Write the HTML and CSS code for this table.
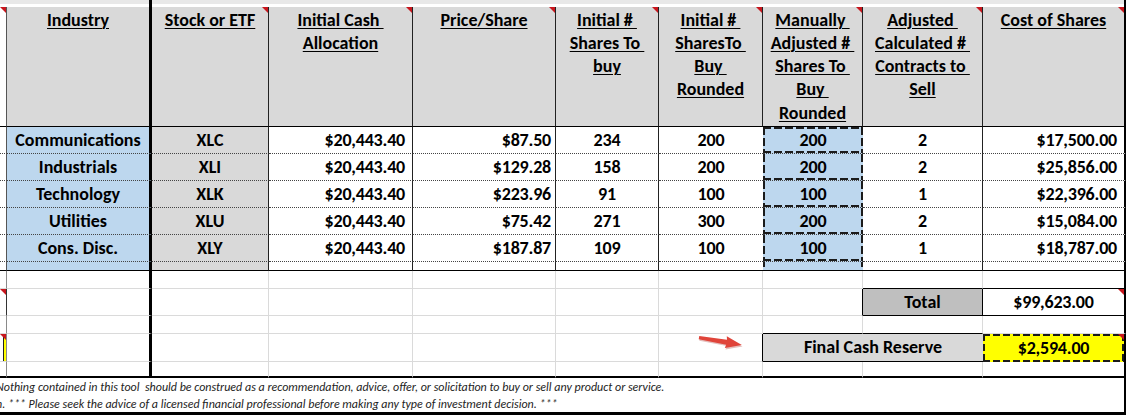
FILE: index.html
```html
<!DOCTYPE html>
<html lang="en">
<head>
<meta charset="utf-8">
<title>Sector allocation</title>
<link rel="stylesheet" href="styles.css">
</head>
<body>
<div class="sheet">
  <!-- top band -->
  <div class="top"></div><div class="top k1"></div><div class="top"></div><div class="top"></div><div class="top"></div><div class="top"></div><div class="top"></div><div class="top"></div><div class="top"></div><div class="top k9"></div>

  <!-- header -->
  <div class="hd stub note"></div>
  <div class="hd k1">Industry</div>
  <div class="hd note">Stock or ETF</div>
  <div class="hd note">Initial Cash&nbsp;<br>Allocation</div>
  <div class="hd note">Price/Share</div>
  <div class="hd note">Initial #&nbsp;<br>Shares To&nbsp;<br>buy</div>
  <div class="hd note">Initial #&nbsp;<br>SharesTo&nbsp;<br>Buy&nbsp;<br>Rounded</div>
  <div class="hd note">Manually&nbsp;<br>Adjusted #&nbsp;<br>Shares To&nbsp;<br>Buy&nbsp;<br>Rounded</div>
  <div class="hd note">Adjusted&nbsp;<br>Calculated #&nbsp;<br>Contracts to&nbsp;<br>Sell</div>
  <div class="hd note k9">Cost of Shares</div>

  <!-- data rows -->
  <div class="dt stub"></div>
  <div class="dt blue k1">Communications</div>
  <div class="dt gray">XLC</div>
  <div class="dt rt num">$20,443.40</div>
  <div class="dt rt rt4 num">$87.50</div>
  <div class="dt num">234</div>
  <div class="dt num nb">200</div>
  <div class="dt num nb ants-t">200</div>
  <div class="dt num">2</div>
  <div class="dt rt num k9">$17,500.00</div>

  <div class="dt stub"></div>
  <div class="dt blue k1">Industrials</div>
  <div class="dt gray">XLI</div>
  <div class="dt rt num">$20,443.40</div>
  <div class="dt rt rt4 num">$129.28</div>
  <div class="dt num">158</div>
  <div class="dt num nb">200</div>
  <div class="dt num nb ants">200</div>
  <div class="dt num">2</div>
  <div class="dt rt num k9">$25,856.00</div>

  <div class="dt stub"></div>
  <div class="dt blue k1">Technology</div>
  <div class="dt gray">XLK</div>
  <div class="dt rt num">$20,443.40</div>
  <div class="dt rt rt4 num">$223.96</div>
  <div class="dt num">91</div>
  <div class="dt num nb">100</div>
  <div class="dt num nb ants">100</div>
  <div class="dt num">1</div>
  <div class="dt rt num k9">$22,396.00</div>

  <div class="dt stub"></div>
  <div class="dt blue k1">Utilities</div>
  <div class="dt gray">XLU</div>
  <div class="dt rt num">$20,443.40</div>
  <div class="dt rt rt4 num">$75.42</div>
  <div class="dt num">271</div>
  <div class="dt num nb">300</div>
  <div class="dt num nb ants">200</div>
  <div class="dt num">2</div>
  <div class="dt rt num k9">$15,084.00</div>

  <div class="dt stub"></div>
  <div class="dt blue k1">Cons. Disc.</div>
  <div class="dt gray">XLY</div>
  <div class="dt rt num">$20,443.40</div>
  <div class="dt rt rt4 num">$187.87</div>
  <div class="dt num">109</div>
  <div class="dt num nb">100</div>
  <div class="dt num nb ants">100</div>
  <div class="dt num">1</div>
  <div class="dt rt num k9">$18,787.00</div>

  <!-- small spacer row -->
  <div class="sm stub"></div>
  <div class="sm blue k1"></div>
  <div class="sm gray"></div>
  <div class="sm"></div>
  <div class="sm"></div>
  <div class="sm"></div>
  <div class="sm nb"></div>
  <div class="sm nb ants-s"></div>
  <div class="sm"></div>
  <div class="sm k9"></div>

  <!-- lower row 1 -->
  <div class="lo stub"></div>
  <div class="lo k1"></div>
  <div class="lo"></div>
  <div class="lo"></div>
  <div class="lo"></div>
  <div class="lo"></div>
  <div class="lo"></div>
  <div class="lo"></div>
  <div class="lo bbk"></div>
  <div class="lo bbk k9"></div>

  <!-- lower row 2: total -->
  <div class="lo stub snote note"></div>
  <div class="lo k1"></div>
  <div class="lo"></div>
  <div class="lo"></div>
  <div class="lo"></div>
  <div class="lo"></div>
  <div class="lo"></div>
  <div class="lo brk"></div>
  <div class="tot">Total</div>
  <div class="val note num">$99,623.00</div>

  <!-- lower row 3 -->
  <div class="lo stub"></div>
  <div class="lo k1"></div>
  <div class="lo"></div>
  <div class="lo"></div>
  <div class="lo"></div>
  <div class="lo"></div>
  <div class="lo"></div>
  <div class="lo bbk"></div>
  <div class="lo bbk"></div>
  <div class="lo k9"></div>

  <!-- lower row 4: final cash reserve -->
  <div class="lo stub syel note"></div>
  <div class="lo k1"></div>
  <div class="lo"></div>
  <div class="lo"></div>
  <div class="lo"></div>
  <div class="lo"></div>
  <div class="lo brk">
    <svg class="arrow" width="50" height="16" viewBox="0 0 50 16" aria-hidden="true">
      <g transform="translate(2 3.5) rotate(9.5)">
        <path d="M0 -1.6 L28 -2.4 L27.2 -5.8 L43.5 0.3 L27.2 6.2 L28 2.6 L0 1.8 Z" fill="#a52820" opacity="0.3" transform="translate(0.9 1.3)"/>
        <path d="M0 -1.6 L28 -2.4 L27.2 -5.8 L43.5 0.3 L27.2 6.2 L28 2.6 L0 1.8 Z" fill="#e0443a"/>
      </g>
    </svg>
  </div>
  <div class="fin">Final Cash Reserve</div>
  <div class="yel note num">$2,594.00</div>

  <!-- lower row 5 -->
  <div class="lo end stub"></div>
  <div class="lo end k1"></div>
  <div class="lo end"></div>
  <div class="lo end"></div>
  <div class="lo end"></div>
  <div class="lo end"></div>
  <div class="lo end"></div>
  <div class="lo end"></div>
  <div class="lo end"></div>
  <div class="lo end k9"></div>

  <!-- disclaimer -->
  <div class="disc">
    <p>Nothing contained in this tool&nbsp; should be construed as a recommendation, advice, offer, or solicitation to buy or sell any product or service.</p>
    <p>n. *** Please seek the advice of a licensed financial professional before making any type of investment decision. ***</p>
  </div>
</div>
</body>
</html>
```

FILE: styles.css
```css
* { box-sizing: border-box; }

html, body {
  margin: 0;
  background: #fff;
  overflow: hidden;
}

.sheet {
  display: grid;
  grid-template-columns: 7px 145px 117px 144px 143px 103px 104px 100px 120px 143px;
  grid-template-rows: 7px 120px repeat(5, 27px) 9px 18px 27px 18px 28px 16px 37px;
  width: 1126px;
  font-family: Carlito, Lato, "DejaVu Sans", sans-serif;
  color: #000;
}

.sheet > div { min-width: 0; }

.top {
  background: linear-gradient(#e8e8e8 0 4px, #fff 4px);
}

.hd {
  position: relative;
  background: #d9d9d9;
  border-right: 1px solid #222;
  border-bottom: 1px solid #000;
  padding-top: 1.5px;
  font-weight: 700;
  font-size: 18px;
  line-height: 23.3px;
  text-align: center;
  text-decoration: underline;
  text-decoration-thickness: 1px;
  text-underline-offset: 2px;
  white-space: nowrap;
}

.hd.stub {
  background: #fff;
  border-right: 1px solid #555;
}

.dt {
  border-right: 1px solid #222;
  border-bottom: 1px dotted #444;
  font-weight: 700;
  font-size: 18px;
  line-height: 26px;
  text-align: center;
  white-space: nowrap;
}

.dt.stub { border-right: 1px solid #555; }

.sm {
  border-right: 1px solid #222;
  border-bottom: 1px solid #000;
}

.sm.stub { border-right: 1px solid #555; }

.lo {
  border-right: 1px solid #dadada;
  border-bottom: 1px solid #dadada;
}

.lo.stub { border-right: 1px solid #8a8a8a; }

.lo.end { border-bottom: 2px solid #000; }

.blue { background: #bdd7ee; }
.gray { background: #d9d9d9; }

.rt {
  text-align: right;
  padding-right: 7px;
}

.sheet .rt4 { padding-right: 4px; }

.num { letter-spacing: -0.2px; }

.sheet .nb { border-right: 0; }
.sheet .bbk { border-bottom: 1px solid #000; }
.sheet .brk { border-right: 1px solid #000; }
.sheet .k1 { border-right: 3px solid #000; }
.sheet .k9 { border-right: 2px solid #000; }

/* marching-ants selection (manually adjusted column) */
.ants {
  background:
    repeating-linear-gradient(90deg, #1b1b1b 0 8px, transparent 8px 11px) left bottom / 100% 2px no-repeat,
    repeating-linear-gradient(180deg, #1b1b1b 0 8px, transparent 8px 11px) left top / 2px 100% no-repeat,
    repeating-linear-gradient(180deg, #1b1b1b 0 8px, transparent 8px 11px) right top / 2px 100% no-repeat,
    #bdd7ee;
}

.ants-t {
  background:
    repeating-linear-gradient(90deg, #1b1b1b 0 8px, transparent 8px 11px) left top / 100% 2px no-repeat,
    repeating-linear-gradient(90deg, #1b1b1b 0 8px, transparent 8px 11px) left bottom / 100% 2px no-repeat,
    repeating-linear-gradient(180deg, #1b1b1b 0 8px, transparent 8px 11px) left top / 2px 100% no-repeat,
    repeating-linear-gradient(180deg, #1b1b1b 0 8px, transparent 8px 11px) right top / 2px 100% no-repeat,
    #bdd7ee;
}

.ants-s {
  background:
    repeating-linear-gradient(180deg, #1b1b1b 0 5px, transparent 5px 8px) left top / 2px 100% no-repeat,
    repeating-linear-gradient(180deg, #1b1b1b 0 5px, transparent 5px 8px) right top / 2px 100% no-repeat,
    #bdd7ee;
}

/* comment indicators */
.note { position: relative; }

.note::after {
  content: "";
  position: absolute;
  top: 0;
  right: 0;
  border-top: 6px solid #c8161d;
  border-left: 6px solid transparent;
}

.sheet .snote { border-right: 1px solid #333; }

.syel {
  background: linear-gradient(90deg, transparent 3px, #222 3px 4px, #ffff00 4px);
}

.tot {
  background: #bfbfbf;
  border-right: 1px solid #000;
  border-bottom: 1px solid #000;
  font-weight: 700;
  font-size: 18px;
  line-height: 26px;
  text-align: center;
}

.val {
  border-right: 2px solid #000;
  border-bottom: 1px solid #000;
  font-weight: 700;
  font-size: 18px;
  line-height: 26px;
  text-align: center;
}

.fin {
  grid-column: span 2;
  background: #d9d9d9;
  border-bottom: 1px solid #000;
  font-weight: 700;
  font-size: 18px;
  line-height: 27px;
  text-align: center;
}

.yel {
  border-right: 2px solid #000;
  font-weight: 700;
  font-size: 18px;
  line-height: 28px;
  text-align: center;
  background:
    repeating-linear-gradient(90deg, #1b1b1b 0 7px, transparent 7px 10px) left top / 100% 2px no-repeat,
    repeating-linear-gradient(90deg, #1b1b1b 0 7px, transparent 7px 10px) left bottom / 100% 2px no-repeat,
    repeating-linear-gradient(180deg, #1b1b1b 0 7px, transparent 7px 10px) left top / 2px 100% no-repeat,
    repeating-linear-gradient(180deg, #1b1b1b 0 7px, transparent 7px 10px) right top / 2px 100% no-repeat,
    #ffff00;
}

.arrow {
  display: block;
  margin: 0 0 0 38px;
}

.disc {
  grid-column: 1 / -1;
  border-right: 2px solid #000;
  border-bottom: 3px solid #000;
  padding-top: 1px;
  font-style: italic;
  font-size: 12px;
  line-height: 17px;
  color: #222;
}

.disc p {
  margin: 0 0 0 -4px;
  white-space: nowrap;
}
```
